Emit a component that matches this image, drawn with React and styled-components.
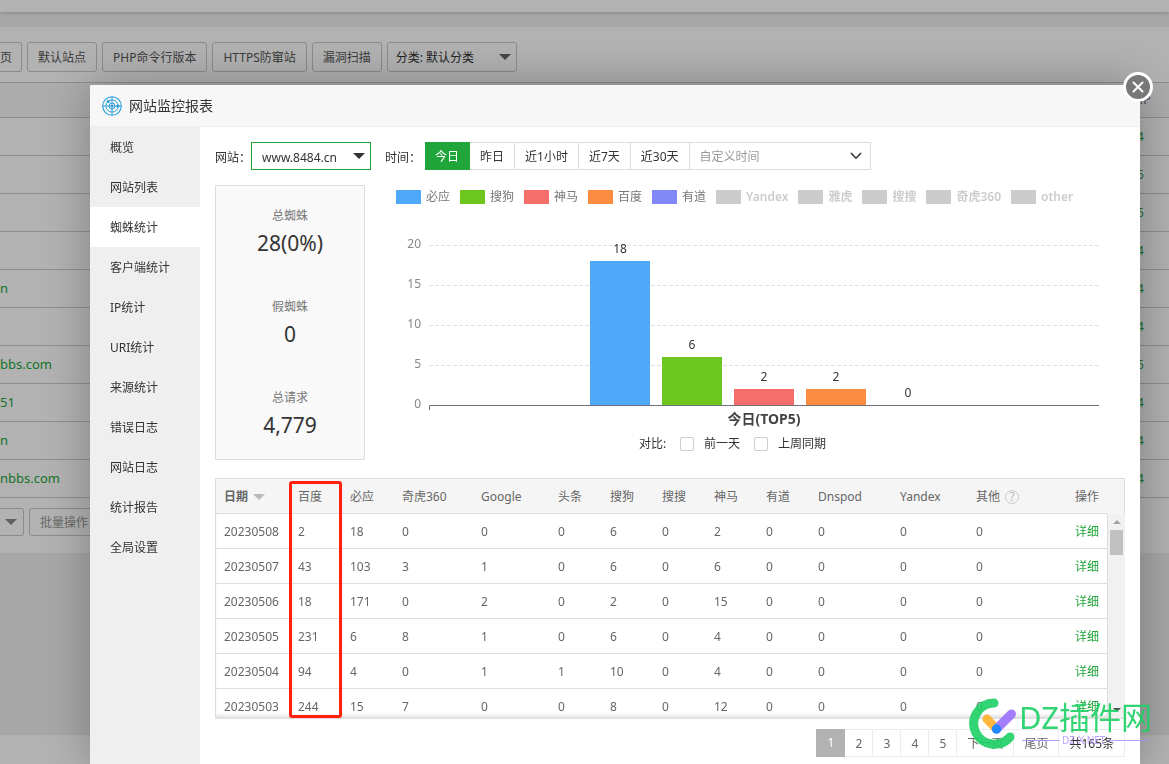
import React, { useState } from "react";
import styled, { createGlobalStyle } from "styled-components";

const menuItems = [
  "概览",
  "网站列表",
  "蜘蛛统计",
  "客户端统计",
  "IP统计",
  "URI统计",
  "来源统计",
  "错误日志",
  "网站日志",
  "统计报告",
  "全局设置",
];

const ranges = ["今日", "昨日", "近1小时", "近7天", "近30天"];

const legend = [
  { name: "必应", color: "#4fa8f9" },
  { name: "搜狗", color: "#6ec71e" },
  { name: "神马", color: "#f56e6a" },
  { name: "百度", color: "#fc8c40" },
  { name: "有道", color: "#8189f8" },
  { name: "Yandex" },
  { name: "雅虎" },
  { name: "搜搜" },
  { name: "奇虎360" },
  { name: "other" },
];

const bars = [
  { value: 18, color: "#4fa8f9" },
  { value: 6, color: "#6ec71e" },
  { value: 2, color: "#f56e6a" },
  { value: 2, color: "#fc8c40" },
  { value: 0, color: "#8189f8" },
];

const stats = [
  { label: "总蜘蛛", value: "28(0%)" },
  { label: "假蜘蛛", value: "0" },
  { label: "总请求", value: "4,779" },
];

const columns = [
  { name: "日期", width: 74 },
  { name: "百度", width: 52 },
  { name: "必应", width: 52 },
  { name: "奇虎360", width: 79 },
  { name: "Google", width: 77 },
  { name: "头条", width: 52 },
  { name: "搜狗", width: 52 },
  { name: "搜搜", width: 52 },
  { name: "神马", width: 52 },
  { name: "有道", width: 52 },
  { name: "Dnspod", width: 82 },
  { name: "Yandex", width: 76 },
  { name: "其他", width: 80 },
  { name: "操作" },
];

const rows = [
  [20230508, 2, 18, 0, 0, 0, 6, 0, 2, 0, 0, 0, 0],
  [20230507, 43, 103, 3, 1, 0, 6, 0, 6, 0, 0, 0, 0],
  [20230506, 18, 171, 0, 2, 0, 2, 0, 15, 0, 0, 0, 0],
  [20230505, 231, 6, 8, 1, 0, 6, 0, 4, 0, 0, 0, 0],
  [20230504, 94, 4, 0, 1, 1, 10, 0, 4, 0, 0, 0, 0],
  [20230503, 244, 15, 7, 0, 0, 8, 0, 12, 0, 0, 0, 0],
];

const sites = [
  { name: "", php: "7.4" },
  { name: "", php: "7.5" },
  { name: "", php: "7.5" },
  { name: "", php: "7.4" },
  { name: "n", php: "7.4" },
  { name: "", php: "7.4" },
  { name: "bbs.com", php: "7.5" },
  { name: "51", php: "7.4" },
  { name: "n", php: "7.4" },
  { name: "nbbs.com", php: "7.4" },
];

const SiteList = () => (
  <Page>
    <TopBar />
    <SitePanel>
      <Toolbar>
        <ToolButton $cut>页</ToolButton>
        <ToolButton>默认站点</ToolButton>
        <ToolButton>PHP命令行版本</ToolButton>
        <ToolButton>HTTPS防窜站</ToolButton>
        <ToolButton>漏洞扫描</ToolButton>
        <SelectBox $width={130}>
          <ToolSelect aria-label="分类">
            <option>分类: 默认分类</option>
          </ToolSelect>
          <Caret $color="#666" />
        </SelectBox>
      </Toolbar>
      <SiteTable>
        <thead>
          <tr>
            <th />
            <PhpHead>PHP</PhpHead>
          </tr>
        </thead>
        <tbody>
          {sites.map((site, i) => (
            <tr key={i}>
              <td>{site.name && <SiteLink href="#">{site.name}</SiteLink>}</td>
              <td>
                <PhpLink href="#">{site.php}</PhpLink>
              </td>
            </tr>
          ))}
        </tbody>
      </SiteTable>
      <BatchBar>
        <SelectBox $width={24} $cut>
          <ToolSelect $cut aria-label="批量">
            <option></option>
          </ToolSelect>
          <Caret $color="#888" />
        </SelectBox>
        <ToolButton $small disabled>
          批量操作
        </ToolButton>
      </BatchBar>
    </SitePanel>
    <PageGap />
    <PageFooter />
  </Page>
);

const RadarIcon = () => (
  <svg width="20" height="20" viewBox="0 0 20 20" fill="none" stroke="#2a9ddb">
    <circle cx="10" cy="10" r="9.3" strokeWidth="1.1" />
    <circle cx="10" cy="10" r="6.1" strokeWidth="1" />
    <circle cx="10" cy="10" r="3" strokeWidth="1" />
    <circle cx="10" cy="10" r="1.2" fill="#2a9ddb" stroke="none" />
    <path d="M10 0.6V19.4M0.6 10H19.4" strokeWidth="1" />
    <circle cx="6.2" cy="5.6" r="1.5" fill="#2a9ddb" stroke="none" />
    <circle cx="16" cy="10" r="1.5" fill="#2a9ddb" stroke="none" />
  </svg>
);

const BarChart = () => {
  const base = 176;
  const unit = 8;
  return (
    <Plot viewBox="0 0 750 205" role="img" aria-label="今日(TOP5)">
      {[20, 15, 10, 5].map((tick) => (
        <line
          key={tick}
          x1="54"
          x2="724"
          y1={base - tick * unit + 0.5}
          y2={base - tick * unit + 0.5}
          stroke="#e0e0ea"
          strokeDasharray="4 2"
        />
      ))}
      {[20, 15, 10, 5, 0].map((tick) => (
        <AxisLabel key={tick} x="46" y={base - tick * unit + 3}>
          {tick}
        </AxisLabel>
      ))}
      {bars.map((bar, i) => (
        <g key={i}>
          <rect
            x={215 + i * 72}
            y={base - bar.value * unit}
            width="60"
            height={bar.value * unit}
            fill={bar.color}
          />
          <BarLabel x={245 + i * 72} y={base - bar.value * unit - 8}>
            {bar.value}
          </BarLabel>
        </g>
      ))}
      <path d="M54.5 181V176.5H724" fill="none" stroke="#6e7079" />
      <ChartTitle x="389" y="195">
        今日(TOP5)
      </ChartTitle>
    </Plot>
  );
};

const Columns = () => (
  <colgroup>
    {columns.map((col) => (
      <Col key={col.name} $width={col.width} />
    ))}
  </colgroup>
);

const SpiderTable = () => (
  <TableBox>
    <HeadWrapper>
      <DataTable>
        <Columns />
        <thead>
          <tr>
            {columns.map((col, i) => (
              <HeadCell
                key={col.name}
                $bold={i === 0}
                $right={i === columns.length - 1}
              >
                {col.name}
                {i === 0 && <SortMark />}
                {col.name === "其他" && <Help href="#">?</Help>}
              </HeadCell>
            ))}
          </tr>
        </thead>
      </DataTable>
    </HeadWrapper>
    <BodyWrapper>
      <DataTable $body>
        <Columns />
        <tbody>
          {rows.map((row) => (
            <tr key={row[0]}>
              {row.map((cell, i) => (
                <BodyCell key={i}>{cell}</BodyCell>
              ))}
              <BodyCell $right>
                <GreenLink href="#">详细</GreenLink>
              </BodyCell>
            </tr>
          ))}
        </tbody>
      </DataTable>
      <ScrollTrack>
        <ScrollArrow $up />
        <ScrollThumb />
        <ScrollArrow />
      </ScrollTrack>
    </BodyWrapper>
    <Highlight />
  </TableBox>
);

const Watermark = () => (
  <WatermarkSvg width="186" height="54" viewBox="0 0 186 54" fill="none">
    <g strokeLinecap="round" opacity="0.9">
      <path
        d="M26 8A20.6 20.6 0 1 0 42 42"
        stroke="#1dd065"
        strokeWidth="9"
      />
      <path d="M19 24L28.5 34" stroke="#ffb02a" strokeWidth="9" />
      <path d="M28.5 34L43.5 19" stroke="#9a72fc" strokeWidth="9" />
      <circle cx="28.5" cy="34" r="4.7" fill="#0a7cff" />
    </g>
    <path d="M54 45.5H92M140 45.5H181" stroke="#a98bfb" opacity="0.8" />
    <WatermarkText x="51" y="34">
      DZ插件网
    </WatermarkText>
    <WatermarkSub x="94" y="49">
      DZ-X.NET
    </WatermarkSub>
  </WatermarkSvg>
);

const App = () => {
  const [activeMenu, setActiveMenu] = useState("蜘蛛统计");
  const [activeRange, setActiveRange] = useState("今日");

  return (
    <>
      <GlobalStyle />
      <SiteList />
      <Overlay>
        <Modal>
          <ModalHeader>
            <RadarIcon />
            网站监控报表
          </ModalHeader>
          <ModalBody>
            <Sidebar>
              {menuItems.map((item) => (
                <MenuButton
                  key={item}
                  $active={item === activeMenu}
                  onClick={() => setActiveMenu(item)}
                >
                  {item}
                </MenuButton>
              ))}
            </Sidebar>
            <Content>
              <Filters>
                <FilterLabel htmlFor="site">网站：</FilterLabel>
                <SiteSelectBox>
                  <SiteSelect id="site">
                    <option>www.8484.cn</option>
                  </SiteSelect>
                  <Caret $color="#333" />
                </SiteSelectBox>
                <TimeLabel>时间：</TimeLabel>
                <RangeGroup>
                  {ranges.map((range) => (
                    <RangeButton
                      key={range}
                      $active={range === activeRange}
                      onClick={() => setActiveRange(range)}
                    >
                      {range}
                    </RangeButton>
                  ))}
                  <CustomRange>
                    <DateInput
                      type="text"
                      placeholder="自定义时间"
                      aria-label="自定义时间"
                    />
                    <svg width="12" height="8" viewBox="0 0 12 8" fill="none">
                      <path d="M1 1L6 6.2L11 1" stroke="#333" strokeWidth="1.6" />
                    </svg>
                  </CustomRange>
                </RangeGroup>
              </Filters>
              <Overview>
                <StatBox>
                  {stats.map((stat) => (
                    <Stat key={stat.label}>
                      <StatLabel>{stat.label}</StatLabel>
                      <StatValue>{stat.value}</StatValue>
                    </Stat>
                  ))}
                </StatBox>
                <ChartArea>
                  <Legend>
                    {legend.map((item) => (
                      <LegendItem key={item.name} $off={!item.color}>
                        <Swatch $color={item.color || "#ccc"} />
                        {item.name}
                      </LegendItem>
                    ))}
                  </Legend>
                  <BarChart />
                  <Compare>
                    对比:
                    <CheckLabel>
                      <CheckBox type="checkbox" />
                      前一天
                    </CheckLabel>
                    <CheckLabel>
                      <CheckBox type="checkbox" />
                      上周同期
                    </CheckLabel>
                  </Compare>
                </ChartArea>
              </Overview>
              <SpiderTable />
              <Pagination>
                <CurrentPage>1</CurrentPage>
                {["2", "3", "4", "5", "下一页", "尾页"].map((page) => (
                  <PageLink key={page} href="#">
                    {page}
                  </PageLink>
                ))}
                <PageTotal>共165条</PageTotal>
              </Pagination>
            </Content>
          </ModalBody>
          <CloseButton aria-label="关闭">
            <svg width="12" height="12" viewBox="0 0 12 12">
              <path
                d="M1.5 1.5L10.5 10.5M10.5 1.5L1.5 10.5"
                stroke="#fff"
                strokeWidth="2"
                strokeLinecap="round"
              />
            </svg>
          </CloseButton>
          <Watermark />
        </Modal>
      </Overlay>
    </>
  );
};

export default App;

const GlobalStyle = createGlobalStyle`
  * {
    box-sizing: border-box;
  }
  body {
    margin: 0;
    overflow: hidden;
    background: #f0f0f0;
    color: #333;
    font-family: "Noto Sans", "Noto Sans CJK SC", sans-serif;
    font-size: 12px;
    line-height: 20px;
  }
  button, input, select {
    font: inherit;
    color: inherit;
  }
  button {
    cursor: pointer;
  }
  a {
    color: inherit;
    text-decoration: none;
  }
  svg {
    display: block;
    flex: none;
  }
`;

/* site list page */

const Page = styled.div`
  display: flex;
  flex-direction: column;
  height: 100vh;
  overflow: hidden;
`;

const TopBar = styled.div`
  flex: none;
  height: 12px;
  margin-bottom: 15px;
  background: #fff;
  box-shadow: 0 1px 4px rgba(0, 0, 0, 0.2);
`;

const SitePanel = styled.div`
  flex: none;
  padding-bottom: 17px;
  background: #fff;
`;

const Toolbar = styled.div`
  display: flex;
  gap: 5px;
  padding: 15px 0 10px;
`;

const ToolButton = styled.button`
  height: ${(props) => (props.$small ? 28 : 30)}px;
  padding: 2px 10px 0;
  border: 1px solid #c8c8c8;
  border-radius: 3px;
  background: transparent;
  color: ${(props) => (props.disabled ? "#999" : "#555")};
  ${(props) =>
    props.$cut &&
    "padding-left: 0; border-left: 0; border-radius: 0 3px 3px 0; width: 22px;"}
`;

const SelectBox = styled.div`
  display: flex;
  align-items: center;
  width: ${(props) => props.$width}px;
  padding-right: ${(props) => (props.$cut ? 6 : 5)}px;
  border: 1px solid #c8c8c8;
  border-radius: 3px;
  ${(props) => props.$cut && "border-left: 0; border-radius: 0 3px 3px 0;"}
`;

const ToolSelect = styled.select`
  flex: 1;
  width: 0;
  min-width: 0;
  padding: ${(props) => (props.$cut ? "0" : "2px 0 0 8px")};
  border: 0;
  appearance: none;
  background: none;
  outline: none;
`;

const Caret = styled.span`
  flex: none;
  border: 6px solid transparent;
  border-top-color: ${(props) => props.$color};
  border-bottom: 0;
`;

const SiteTable = styled.table`
  width: 100%;
  border-collapse: collapse;
  table-layout: fixed;
  border-top: 1px solid #ccc;
  th {
    height: 35px;
    padding: 0;
    background: #f6f6f6;
    text-align: left;
    font-weight: normal;
  }
  td {
    height: 38px;
    padding: 0;
    border-top: 1px solid #ccc;
  }
  tbody {
    border-bottom: 1px solid #ccc;
  }
`;

const PhpHead = styled.th`
  width: 42px;
  color: #666;
`;

const SiteLink = styled.a`
  color: #20a53a;
  font-size: 13px;
`;

const PhpLink = styled.a`
  color: #20a53a;
`;

const BatchBar = styled.div`
  display: flex;
  gap: 5px;
  padding-top: 10px;
`;

const PageGap = styled.div`
  flex: none;
  height: 182px;
`;

const PageFooter = styled.div`
  flex: 1;
  background: #fff;
`;

/* report dialog */

const Overlay = styled.div`
  position: fixed;
  inset: 0;
  display: flex;
  padding: 85px 29px 0 90px;
  background: rgba(0, 0, 0, 0.3);
`;

const Modal = styled.div`
  position: relative;
  display: flex;
  flex-direction: column;
  flex: 1;
  min-width: 0;
  border-radius: 2px 2px 0 0;
  background: #fff;
  box-shadow: 1px 1px 50px rgba(0, 0, 0, 0.3);
`;

const ModalHeader = styled.div`
  display: flex;
  align-items: center;
  gap: 7px;
  height: 42px;
  padding-left: 12px;
  border-bottom: 1px solid #eee;
  border-radius: 2px 2px 0 0;
  background: #f7f7f7;
  font-size: 14px;
`;

const ModalBody = styled.div`
  display: flex;
  flex: 1;
  min-height: 0;
`;

const Sidebar = styled.nav`
  flex: none;
  width: 110px;
  background: #efefef;
`;

const MenuButton = styled.button`
  display: block;
  width: 100%;
  height: 40px;
  padding: 2px 0 0 20px;
  border: 0;
  background: ${(props) => (props.$active ? "#fff" : "transparent")};
  text-align: left;
`;

const Content = styled.div`
  flex: 1;
  min-width: 0;
  padding: 15px;
`;

const Filters = styled.div`
  display: flex;
  align-items: center;
  height: 28px;
`;

const FilterLabel = styled.label`
  padding-top: 4px;
`;

const SiteSelectBox = styled.div`
  display: flex;
  align-items: center;
  width: 120px;
  height: 28px;
  padding-right: 5px;
  border: 1px solid #20a53a;
`;

const SiteSelect = styled.select`
  flex: 1;
  min-width: 0;
  padding: 4px 0 0 10px;
  border: 0;
  appearance: none;
  background: none;
  outline: none;
`;

const TimeLabel = styled.span`
  margin-left: 14px;
  padding-top: 4px;
`;

const RangeGroup = styled.div`
  display: flex;
  height: 28px;
  margin-left: 4px;
  border: 1px solid #ddd;
  border-left: 0;
`;

const RangeButton = styled.button`
  margin: ${(props) => (props.$active ? "-1px 0" : "0")};
  padding: 2px 10px 0;
  border: 0;
  border-right: 1px solid ${(props) => (props.$active ? "#20a53a" : "#ddd")};
  background: ${(props) => (props.$active ? "#20a53a" : "#fff")};
  color: ${(props) => (props.$active ? "#fff" : "#333")};
`;

const CustomRange = styled.div`
  display: flex;
  align-items: center;
  width: 180px;
  padding: 0 8px 0 10px;
`;

const DateInput = styled.input`
  flex: 1;
  min-width: 0;
  padding: 2px 0 0;
  border: 0;
  background: none;
  outline: none;
  &::placeholder {
    color: #999;
  }
`;

const Overview = styled.div`
  display: flex;
  margin-top: 15px;
`;

const StatBox = styled.div`
  display: flex;
  flex-direction: column;
  justify-content: space-around;
  flex: none;
  width: 150px;
  height: 275px;
  border: 1px solid #ddd;
  background: #f9f9f9;
  text-align: center;
`;

const Stat = styled.div`
  padding-top: 2px;
`;

const StatLabel = styled.div`
  color: #777;
`;

const StatValue = styled.div`
  font-size: 21px;
  line-height: 34px;
`;

const ChartArea = styled.div`
  flex: 1;
  min-width: 0;
  margin-left: 10px;
`;

const Legend = styled.div`
  display: flex;
  gap: 10px;
  padding: 2px 0 22px 21px;
  white-space: nowrap;
`;

const LegendItem = styled.div`
  display: flex;
  align-items: center;
  gap: 5px;
  color: ${(props) => (props.$off ? "#ccc" : "#777")};
  font-weight: ${(props) => (props.$off ? 600 : 400)};
`;

const Swatch = styled.span`
  width: 25px;
  height: 14px;
  background: ${(props) => props.$color};
`;

const Plot = styled.svg`
  width: 100%;
`;

const AxisLabel = styled.text`
  fill: #888;
  text-anchor: end;
`;

const BarLabel = styled.text`
  fill: #333;
  text-anchor: middle;
`;

const ChartTitle = styled.text`
  fill: #444;
  font-size: 14px;
  font-weight: bold;
  text-anchor: middle;
`;

const Compare = styled.div`
  display: flex;
  justify-content: center;
  gap: 14px;
  padding-right: 35px;
`;

const CheckLabel = styled.label`
  display: flex;
  align-items: center;
  gap: 10px;
`;

const CheckBox = styled.input`
  width: 14px;
  height: 14px;
  margin: 0;
  border: 1px solid #ccc;
  border-radius: 2px;
  appearance: none;
  background: #fff;
  &:checked {
    background: #20a53a;
  }
`;

const TableBox = styled.div`
  position: relative;
  margin-top: 18px;
  border: 1px solid #ddd;
`;

const HeadWrapper = styled.div`
  padding-right: 17px;
  background: #f5f5f5;
`;

const BodyWrapper = styled.div`
  display: flex;
  align-items: stretch;
  height: 204px;
  margin-right: -1px;
  overflow: hidden;
  box-shadow: inset 0 -4px 4px -2px rgba(0, 0, 0, 0.15);
`;

const DataTable = styled.table`
  flex: 1;
  width: 100%;
  min-width: 0;
  border-collapse: collapse;
  table-layout: fixed;
  color: #666;
  border-right: ${(props) => (props.$body ? "1px solid #ddd" : "0")};
`;

const Col = styled.col`
  width: ${(props) => (props.$width ? `${props.$width}px` : "auto")};
`;

const HeadCell = styled.th`
  height: 34px;
  padding: 2px 8px 0;
  border-bottom: 1px solid #ddd;
  font-weight: ${(props) => (props.$bold ? "bold" : "normal")};
  text-align: ${(props) => (props.$right ? "right" : "left")};
  white-space: nowrap;
`;

const BodyCell = styled.td`
  height: 35px;
  padding: 2px 8px 0;
  border-bottom: 1px solid #ddd;
  text-align: ${(props) => (props.$right ? "right" : "left")};
  white-space: nowrap;
`;

const SortMark = styled.span`
  display: inline-block;
  margin-left: 5px;
  border: 6px solid transparent;
  border-top-color: #bbb;
  border-bottom: 0;
  vertical-align: 1px;
`;

const Help = styled.a`
  display: inline-block;
  width: 14px;
  height: 14px;
  margin-left: 5px;
  border: 1px solid #ccc;
  border-radius: 50%;
  color: #bbb;
  line-height: 12px;
  text-align: center;
`;

const GreenLink = styled.a`
  color: #20a53a;
`;

const ScrollTrack = styled.div`
  display: flex;
  flex-direction: column;
  align-items: center;
  flex: none;
  width: 17px;
  padding: 6px 0;
  background: #f1f1f1;
`;

const ScrollArrow = styled.span`
  border: 4px solid transparent;
  ${(props) =>
    props.$up
      ? "border-top: 0; border-bottom-color: #a3a3a3; margin-bottom: 6px;"
      : "border-bottom: 0; border-top-color: #505050; margin-top: auto;"}
`;

const ScrollThumb = styled.span`
  width: 13px;
  height: 25px;
  background: #c1c1c1;
`;

const Highlight = styled.div`
  position: absolute;
  top: 2px;
  left: 73px;
  width: 53px;
  height: 237px;
  border: 3px solid #ff2010;
  border-radius: 3px;
`;

const Pagination = styled.div`
  display: flex;
  justify-content: flex-end;
  margin-top: 10px;
  color: #666;
`;

const PageLink = styled.a`
  min-width: 28px;
  height: 28px;
  padding: 0 10px;
  border: 1px solid #ececec;
  border-left: 0;
  line-height: 28px;
  text-align: center;
`;

const CurrentPage = styled.span`
  width: 29px;
  height: 28px;
  background: #b2b2b2;
  color: #fff;
  line-height: 28px;
  text-align: center;
`;

const PageTotal = styled.span`
  height: 28px;
  padding: 0 10px;
  border: 1px solid #ececec;
  border-left: 0;
  color: #333;
  line-height: 28px;
`;

const CloseButton = styled.button`
  position: absolute;
  top: -13px;
  right: -13px;
  display: flex;
  align-items: center;
  justify-content: center;
  width: 30px;
  height: 30px;
  padding: 0;
  border: 3px solid #fff;
  border-radius: 50%;
  background: #787878;
`;

const WatermarkSvg = styled.svg`
  position: absolute;
  right: -14px;
  bottom: 15px;
  pointer-events: none;
`;

const WatermarkText = styled.text`
  fill: #1dd065;
  font-size: 31px;
  opacity: 0.9;
`;

const WatermarkSub = styled.text`
  fill: #a98bfb;
  font-size: 10px;
  opacity: 0.8;
`;
